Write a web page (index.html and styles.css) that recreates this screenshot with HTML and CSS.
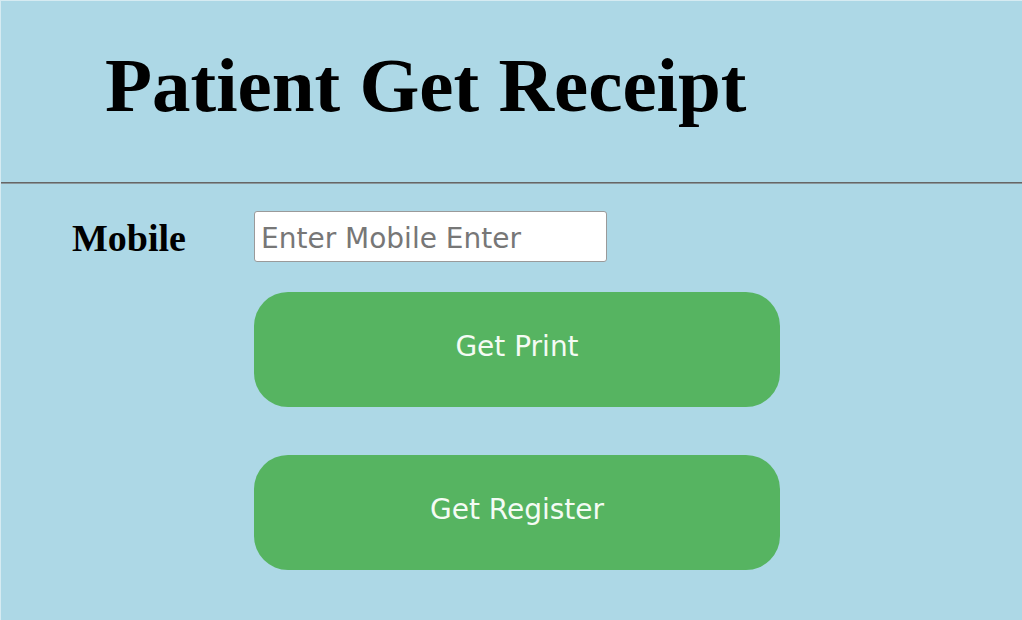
FILE: index.html
```html
<!DOCTYPE html>
<html>
<head>
<meta charset="utf-8">
<title>Patient Get Receipt</title>
<link rel="stylesheet" href="styles.css">
</head>
<body>
<div class="page">
  <header class="header">
    <h1 class="title">Patient Get Receipt</h1>
  </header>
  <div class="rule"></div>
  <main class="form">
    <div class="row">
      <label class="label" for="mobile">Mobile</label>
      <input class="input" id="mobile" type="text" placeholder="Enter Mobile Enter">
    </div>
    <div class="actions">
      <button class="btn">Get Print</button>
      <button class="btn btn-second">Get Register</button>
    </div>
  </main>
</div>
</body>
</html>
```

FILE: styles.css
```css
html, body {
  margin: 0;
  padding: 0;
  background: #add8e6;
}
.page {
  width: 1022px;
  height: 620px;
  box-sizing: border-box;
  border-left: 1px solid #d6ebf2;
  border-top: 1px solid #d6ebf2;
  background: #add8e6;
  overflow: hidden;
}
.header {
  height: 181px;
  box-sizing: border-box;
  padding-top: 46px;
  padding-left: 104px;
}
.title {
  margin: 0;
  font-family: "Liberation Serif", "Times New Roman", serif;
  font-weight: bold;
  font-size: 77px;
  line-height: 1;
  color: #000;
}
.rule {
  height: 1px;
  background: #666;
  border-bottom: 1px solid #8a979b;
}
.form {
  padding-top: 27px;
  padding-left: 71px;
}
.row {
  display: flex;
  align-items: center;
}
.label {
  width: 182px;
  font-family: "Liberation Serif", "Times New Roman", serif;
  font-weight: bold;
  font-size: 38px;
  line-height: 1;
  color: #000;
  padding-top: 2px;
}
.input {
  width: 353px;
  height: 51px;
  box-sizing: border-box;
  border: 1px solid #9a9a9a;
  border-radius: 3px;
  background: #fff;
  padding: 3px 0 0 6px;
  font-family: "DejaVu Sans", Verdana, sans-serif;
  font-size: 28px;
  color: #333;
  outline: none;
}
.input::placeholder {
  color: #777;
}
.actions {
  display: flex;
  flex-direction: column;
  gap: 48px;
  margin-top: 30px;
  padding-left: 182px;
}
.btn {
  width: 526px;
  height: 115px;
  border: none;
  border-radius: 34px;
  background: #56b461;
  color: #f4fbf4;
  font-family: "DejaVu Sans", Verdana, sans-serif;
  font-size: 28px;
  padding: 0 0 6px 0;
  cursor: pointer;
}
```
